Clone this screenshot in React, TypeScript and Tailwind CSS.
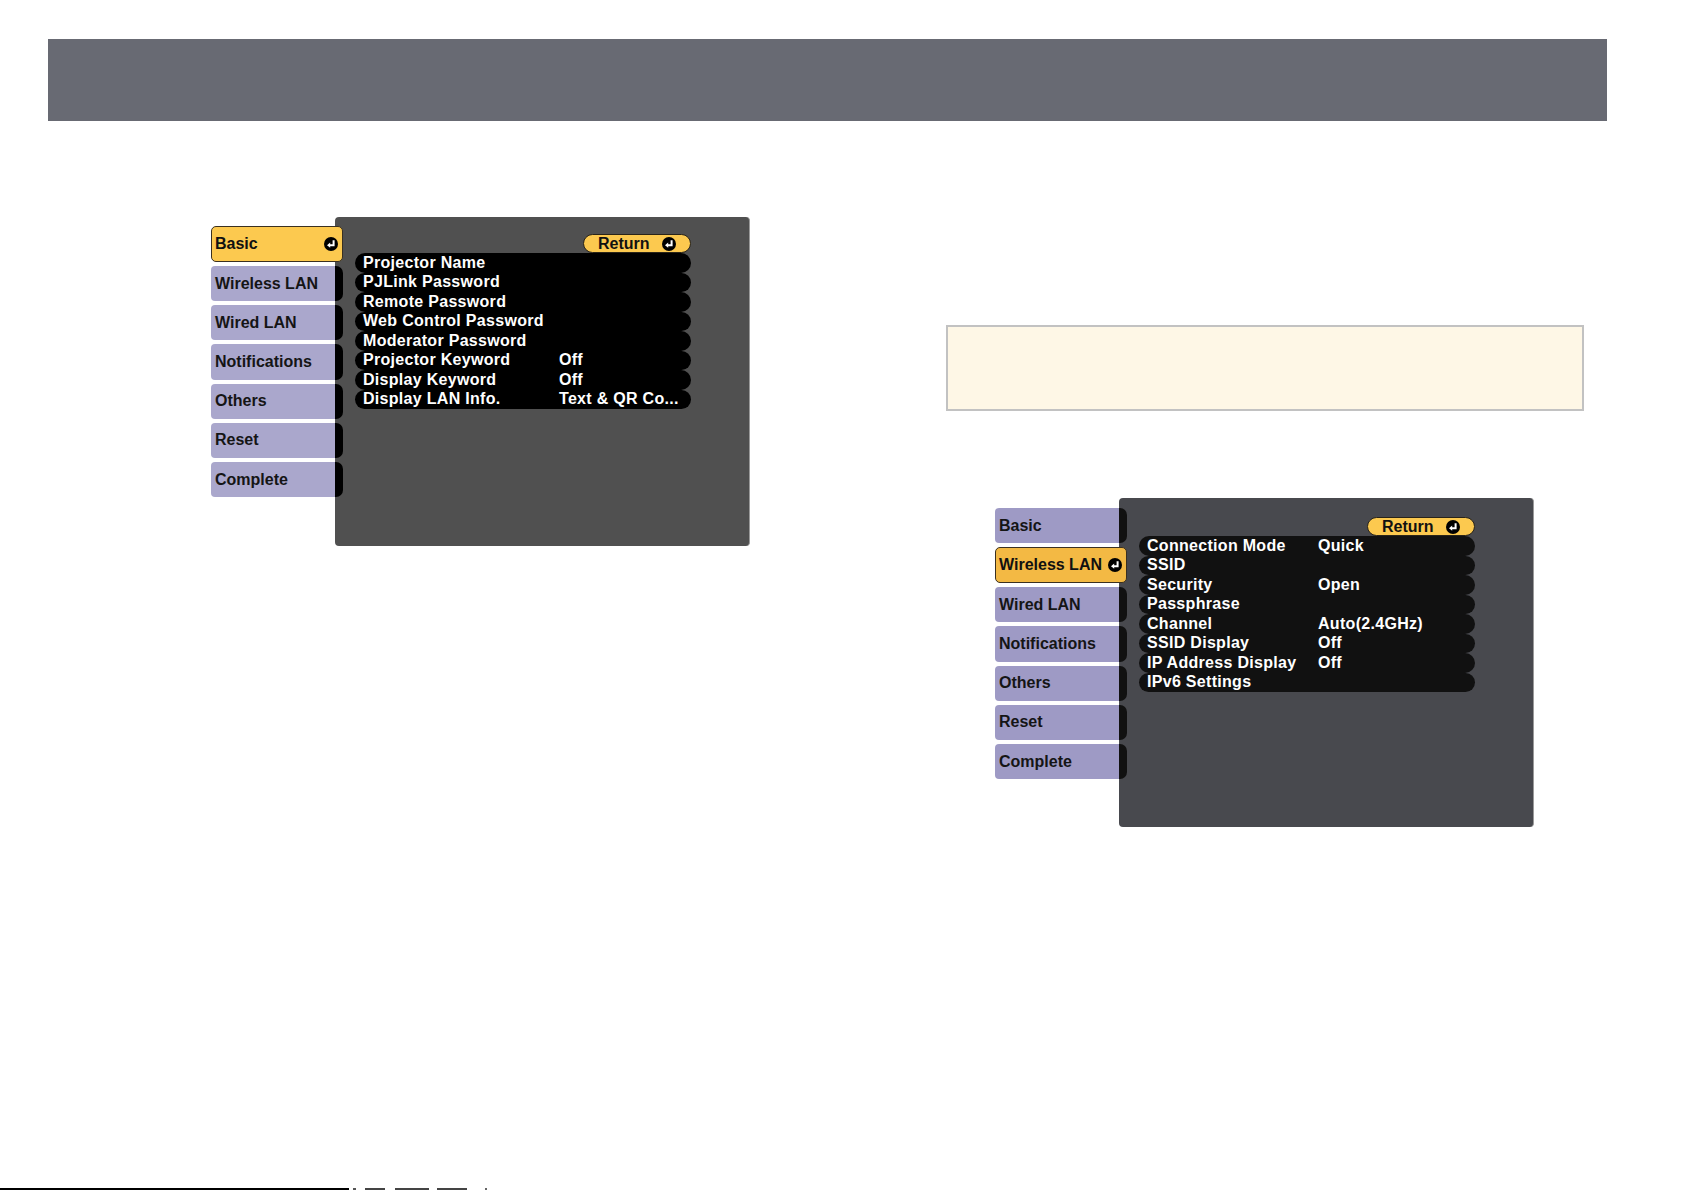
import React from "react"

type Row = { label: string; value?: string }

type Theme = {
  panel: string
  rowBg: string
  tab: string
  active: string
  notch: string
  valueCol: string
  tabTop: string
  panelTop: string
}

const basicRows: Row[] = [
  { label: "Projector Name" },
  { label: "PJLink Password" },
  { label: "Remote Password" },
  { label: "Web Control Password" },
  { label: "Moderator Password" },
  { label: "Projector Keyword", value: "Off" },
  { label: "Display Keyword", value: "Off" },
  { label: "Display LAN Info.", value: "Text & QR Co..." },
]

const wirelessRows: Row[] = [
  { label: "Connection Mode", value: "Quick" },
  { label: "SSID" },
  { label: "Security", value: "Open" },
  { label: "Passphrase" },
  { label: "Channel", value: "Auto(2.4GHz)" },
  { label: "SSID Display", value: "Off" },
  { label: "IP Address Display", value: "Off" },
  { label: "IPv6 Settings" },
]

const tabs = ["Basic", "Wireless LAN", "Wired LAN", "Notifications", "Others", "Reset", "Complete"]

function EnterIcon() {
  return (
    <svg width="14" height="14" viewBox="0 0 14 14" className="shrink-0">
      <circle cx="7" cy="7" r="7" fill="#000" />
      <path d="M9.6 3.2 V8.2 H5.6" fill="none" stroke="#fff" strokeWidth="2" />
      <polygon points="3,8.2 6.2,5.6 6.2,10.8" fill="#fff" />
    </svg>
  )
}

function Menu({ active, rows, theme }: { active: string; rows: Row[]; theme: Theme }) {
  return (
    <div className="flex items-start font-['Liberation_Sans',Arial,sans-serif] font-bold text-[16px]">
      <div className={`relative z-10 flex w-[132px] flex-col gap-[4px] ${theme.tabTop}`}>
        {tabs.map((t) =>
          t === active ? (
            <div
              key={t}
              className={`flex h-[36px] w-[132px] items-center justify-between rounded-[5px] border border-[#3a3020] pl-[3px] pr-[4px] text-[#111] ${theme.active}`}
            >
              <span>{t}</span>
              <EnterIcon />
            </div>
          ) : (
            <div key={t} className="flex h-[35.2px] w-[132px]">
              <div className={`flex w-[124px] items-center rounded-l-[4px] pl-[4px] text-[#151515] ${theme.tab}`}>{t}</div>
              <div className={`w-[8px] rounded-r-[7px] ${theme.notch}`} />
            </div>
          )
        )}
      </div>
      <div className={`-ml-[8px] h-[329px] w-[415px] rounded-[4px] border-r border-[#9a9a9a] pl-[20px] ${theme.panelTop} ${theme.panel}`}>
        <div className="flex w-[336px] flex-col">
          <div className="flex justify-end">
            <div className="flex h-[19px] w-[108px] items-center gap-[12px] rounded-full border border-[#2a2418] bg-[#fcc94f] pl-[14px] text-[#111]">
              <span className="leading-none">Return</span>
              <EnterIcon />
            </div>
          </div>
          <div className="flex flex-col">
            {rows.map((r) => (
              <div
                key={r.label}
                className={`flex h-[19.5px] items-center rounded-[10px] pl-[8px] leading-none tracking-[0.3px] text-white ${theme.rowBg}`}
              >
                <span className={`shrink-0 ${theme.valueCol}`}>{r.label}</span>
                <span>{r.value ?? ""}</span>
              </div>
            ))}
          </div>
        </div>
      </div>
    </div>
  )
}

export default function App() {
  const first: Theme = {
    panel: "bg-[#505050]",
    rowBg: "bg-black",
    tab: "bg-[#aaa7cc]",
    active: "bg-[#fcc94f]",
    notch: "bg-black",
    valueCol: "w-[196px]",
    tabTop: "pt-[9px]",
    panelTop: "pt-[17px]",
  }
  const second: Theme = {
    panel: "bg-[#48494e]",
    rowBg: "bg-[#111111]",
    tab: "bg-[#9e9ac5]",
    active: "bg-[#f3b944]",
    notch: "bg-[#111111]",
    valueCol: "w-[171px]",
    tabTop: "pt-[10px]",
    panelTop: "pt-[19px]",
  }

  return (
    <div className="flex h-[1191px] w-[1685px] flex-col overflow-hidden bg-white">
      <div className="ml-[48px] mt-[39px] h-[82px] w-[1559px] shrink-0 bg-[#686a73]" />
      <div className="flex items-start">
        <div className="ml-[211px] mt-[96px]">
          <Menu active="Basic" rows={basicRows} theme={first} />
        </div>
        <div className="ml-[196px] mt-[204px] flex flex-col">
          <div className="h-[86px] w-[638px] border-2 border-[#c2c2c2] bg-[#fef7e6]" />
          <div className="ml-[49px] mt-[87px]">
            <Menu active="Wireless LAN" rows={wirelessRows} theme={second} />
          </div>
        </div>
      </div>
      <div className="mt-auto mb-[1px] flex h-[2px] items-stretch">
        <div className="w-[349px] bg-black" />
        <div className="ml-[4px] w-[3px] bg-[#555]" />
        <div className="ml-[9px] w-[20px] bg-[#444]" />
        <div className="ml-[10px] w-[34px] bg-[#444]" />
        <div className="ml-[8px] w-[30px] bg-[#444]" />
        <div className="ml-[18px] w-[2px] bg-[#666]" />
      </div>
    </div>
  )
}
